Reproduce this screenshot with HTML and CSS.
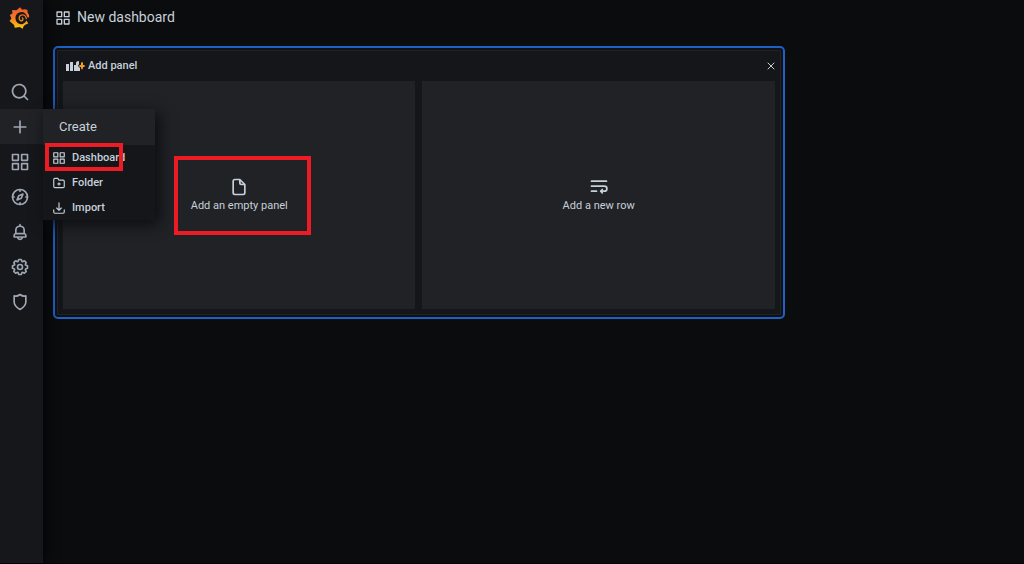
FILE: index.html
```html
<!DOCTYPE html>
<html lang="en">
<head>
<meta charset="utf-8">
<meta name="viewport" content="width=device-width, initial-scale=1">
<title>New dashboard</title>
<link rel="stylesheet" href="styles.css">
</head>
<body>
<svg class="sprite" aria-hidden="true">
  <symbol id="apps" viewBox="0 0 24 24"><path class="line" d="M3 3h7v7H3zM14 3h7v7h-7zM3 14h7v7H3zM14 14h7v7h-7z"/></symbol>
</svg>
<div class="app">
  <aside class="sidebar">
    <a class="logo" href="#" aria-label="Home">
      <svg viewBox="27 21 63 67" width="21" height="22">
        <defs><linearGradient id="flame" gradientUnits="userSpaceOnUse" x1="0" y1="22" x2="0" y2="87"><stop offset="0" stop-color="#f05a28"/><stop offset=".45" stop-color="#f4752a"/><stop offset="1" stop-color="#fbca0a"/></linearGradient></defs>
        <path fill="url(#flame)" d="M60 22L67 29Q75 27 83 30L83 38Q88 44 88 52L83 53Q78 36 65 36Q48 37 46 53Q46 69 60 73Q73 75 80 62L85 71L76 75L71 80L68 87L59 82L44 84L42 76L28 64L34 56L29 45L37 41L36 30L49 31Z"/>
        <path fill="none" stroke="url(#flame)" stroke-width="4" stroke-linecap="round" d="M79 56C78 46 70 43 63 46C55 50 56 61 63 63C69 63 71 57 67 54"/>
      </svg>
    </a>
    <nav aria-label="Main">
      <ul class="nav">
        <li><a class="nav-link" href="#" aria-label="Search"><svg class="icon large" viewBox="0 0 24 24"><path d="M21.71 20.29 18 16.61A9 9 0 1 0 16.61 18l3.68 3.68a1 1 0 0 0 1.42 0 1 1 0 0 0 0-1.39ZM11 18a7 7 0 1 1 7-7 7 7 0 0 1-7 7Z"/></svg></a></li>
        <li class="active"><a class="nav-link" href="#" aria-label="Create"><svg class="icon large" viewBox="0 0 24 24"><path d="M19 11h-6V5a1 1 0 0 0-2 0v6H5a1 1 0 0 0 0 2h6v6a1 1 0 0 0 2 0v-6h6a1 1 0 0 0 0-2Z"/></svg></a>
          <div class="menu">
            <a class="menu-title" href="#">Create</a>
            <ul class="menu-list">
              <li class="marked"><a href="#"><svg class="icon small"><use href="#apps"/></svg>Dashboard</a></li>
              <li><a href="#"><svg class="icon small" viewBox="0 0 24 24"><path class="line" d="M5 4h5l1.500 3H19a2 2 0 0 1 2 2v9a2 2 0 0 1-2 2H5a2 2 0 0 1-2-2V6a2 2 0 0 1 2-2ZM12 11.500v4M10 13.500h4"/></svg>Folder</a></li>
              <li><a href="#"><svg class="icon small" viewBox="0 0 24 24"><path class="line" d="M12 3v13M8 12l4 4 4-4M3 15v4a2 2 0 0 0 2 2h14a2 2 0 0 0 2-2v-4"/></svg>Import</a></li>
            </ul>
          </div>
        </li>
        <li><a class="nav-link" href="#" aria-label="Dashboards"><svg class="icon large"><use href="#apps"/></svg></a></li>
        <li><a class="nav-link" href="#" aria-label="Explore"><svg class="icon large" viewBox="0 0 24 24"><circle class="line" cx="12" cy="12" r="9"/><path class="line" d="M12 3v2M12 19v2M3 12h2M19 12h2M15.500 8.500l-2 5-5 2 2-5Z"/></svg></a></li>
        <li><a class="nav-link" href="#" aria-label="Alerting"><svg class="icon large" viewBox="0 0 24 24"><path d="M18 13.180V10a6 6 0 0 0-5-5.910V3a1 1 0 0 0-2 0v1.090A6 6 0 0 0 6 10v3.180A3 3 0 0 0 4 16v2a1 1 0 0 0 1 1h3.140a4 4 0 0 0 7.720 0H19a1 1 0 0 0 1-1v-2a3 3 0 0 0-2-2.820ZM8 10a4 4 0 0 1 8 0v3H8Zm4 10a2 2 0 0 1-1.720-1h3.440A2 2 0 0 1 12 20Zm6-3H6v-1a1 1 0 0 1 1-1h10a1 1 0 0 1 1 1Z"/></svg></a></li>
        <li><a class="nav-link" href="#" aria-label="Configuration"><svg class="icon large" viewBox="0 0 24 24"><path d="M21.32,9.55l-1.89-.63.89-1.78A1,1,0,0,0,20.13,6L18,3.87a1,1,0,0,0-1.15-.19l-1.78.89-.63-1.89A1,1,0,0,0,13.5,2h-3a1,1,0,0,0-.95.68L8.92,4.57,7.14,3.68A1,1,0,0,0,6,3.87L3.87,6a1,1,0,0,0-.19,1.15l.89,1.78-1.89.63A1,1,0,0,0,2,10.5v3a1,1,0,0,0,.68.95l1.89.63-.89,1.78A1,1,0,0,0,3.87,18L6,20.13a1,1,0,0,0,1.15.19l1.78-.89.63,1.89a1,1,0,0,0,.95.68h3a1,1,0,0,0,.95-.68l.63-1.89,1.78.89A1,1,0,0,0,18,20.13L20.13,18a1,1,0,0,0,.19-1.15l-.89-1.78,1.89-.63A1,1,0,0,0,22,13.5v-3A1,1,0,0,0,21.32,9.55ZM20,12.78l-1.2.4A2,2,0,0,0,17.64,16l.57,1.14-1.1,1.1L16,17.64a2,2,0,0,0-2.79,1.16l-.4,1.2H11.22l-.4-1.2A2,2,0,0,0,8,17.64l-1.14.57-1.1-1.1L6.36,16A2,2,0,0,0,5.2,13.18L4,12.78V11.22l1.2-.4A2,2,0,0,0,6.36,8L5.79,6.89l1.1-1.1L8,6.36A2,2,0,0,0,10.82,5.2l.4-1.2h1.56l.4,1.2A2,2,0,0,0,16,6.36l1.14-.57,1.1,1.1L17.64,8a2,2,0,0,0,1.16,2.79l1.2.4ZM12,8a4,4,0,1,0,4,4A4,4,0,0,0,12,8Zm0,6a2,2,0,1,1,2-2A2,2,0,0,1,12,14Z"/></svg></a></li>
        <li><a class="nav-link" href="#" aria-label="Server Admin"><svg class="icon large" viewBox="0 0 24 24"><path class="line" d="M12 3Q16 6 19 4.500V12Q19 17 12 21Q5 17 5 12V4.500Q8 6 12 3Z"/></svg></a></li>
      </ul>
    </nav>
  </aside>
  <main class="main">
    <header class="toolbar">
      <svg class="icon medium"><use href="#apps"/></svg>
      <h1>New dashboard</h1>
    </header>
    <section class="panel" aria-labelledby="panel-title">
      <header class="panel-head">
        <svg viewBox="0 0 20 12" width="20" height="12" aria-hidden="true"><path fill="#c7d0d9" d="M0 4h3v7H0zM4 2h3v9H4zM8 5h2v6H8zM10 3q0-2 3-2v3l-1 2 2 2v3h-4z"/><path fill="#f79a28" d="M15 3q1-2 2 0v2h1q2 1 0 2h-1v1q-1 3-2 0V7h-1q-2-1 0-2h1z"/></svg>
        <h2 id="panel-title">Add panel</h2>
        <button class="close" type="button" aria-label="Close"><svg viewBox="0 0 8 8" width="8" height="8"><path class="line" d="M1 1l6 6M7 1L1 7"/></svg></button>
      </header>
      <div class="choices">
        <button class="choice" type="button">
          <span class="choice-label marked"><svg class="icon choice-icon" viewBox="0 0 24 24"><path class="line" d="M13 3H7a2 2 0 0 0-2 2v14a2 2 0 0 0 2 2h10a2 2 0 0 0 2-2V9ZM13 3v4a2 2 0 0 0 2 2h4"/></svg>Add an empty panel</span>
        </button>
        <button class="choice" type="button">
          <span class="choice-label"><svg class="icon choice-icon" viewBox="0 0 24 24"><path class="line" d="M3 5h18M3 11h15.500a2.500 2.500 0 0 1 0 6H14M3 17h6M16 15l-2 2 2 2"/></svg>Add a new row</span>
        </button>
      </div>
    </section>
  </main>
</div>
</body>
</html>
```
FILE: styles.css
```css
* {
  box-sizing: border-box;
}

body {
  margin: 0;
  background: #0b0c0e;
  color: #c7d0d9;
  font: 11px/16px Roboto, "Liberation Sans", sans-serif;
}

h1,
h2,
ul {
  margin: 0;
  padding: 0;
  list-style: none;
}

a {
  color: inherit;
  text-decoration: none;
}

button {
  border: 0;
  padding: 0;
  background: none;
  color: inherit;
  font: inherit;
  cursor: pointer;
}

svg {
  display: block;
  flex: none;
}

.sprite {
  position: absolute;
  width: 0;
  height: 0;
}

.icon {
  fill: currentColor;
}

.line {
  fill: none;
  stroke: currentColor;
  stroke-width: 2;
  stroke-linecap: round;
  stroke-linejoin: round;
}

.small {
  width: 14px;
  height: 14px;
}

.medium {
  width: 16px;
  height: 16px;
}

.large,
.choice-icon {
  width: 20px;
  height: 20px;
}

.app {
  display: flex;
  min-height: 100vh;
  border-bottom: 1px solid #08020b;
}

.sidebar {
  position: relative;
  z-index: 1;
  flex: none;
  width: 43px;
  background: #15171b;
  box-shadow: 0 0 16px #000;
  color: #9fa7b3;
}

.logo {
  display: block;
  padding: 7px 0 0 9px;
  height: 74px;
}

.nav > li {
  position: relative;
}

.nav-link {
  display: flex;
  align-items: center;
  padding-left: 10px;
  height: 35px;
}

.active {
  background: #202226;
}

.menu {
  position: absolute;
  top: 0;
  left: 100%;
  width: 112px;
  background: #141619;
  box-shadow: 4px 4px 14px #0b0c0e;
  color: #c7d0d9;
}

.menu-title {
  display: block;
  padding: 8px 16px;
  background: #202226;
  font-size: 13px;
  line-height: 20px;
}

.menu-list a {
  display: flex;
  align-items: center;
  gap: 6px;
  padding-left: 9px;
  height: 25px;
  font-weight: 500;
}

.marked {
  position: relative;
}

.marked::after {
  content: "";
  position: absolute;
  border: 4px solid #ed1c24;
  pointer-events: none;
}

.menu .marked::after {
  inset: -2px 32px -1px 2px;
}

.choice .marked::after {
  inset: -21px -23px -21px -17px;
}

.main {
  flex: 1;
  padding: 0 8px 8px 10px;
}

.toolbar {
  display: flex;
  align-items: center;
  gap: 6px;
  padding: 5px 2px 16px;
}

.toolbar h1 {
  font-size: 14px;
  font-weight: 400;
  line-height: 25px;
}

.panel {
  width: 76%;
  padding: 8px;
  border: 2px solid #1f60c4;
  border-radius: 5px;
  background: #141619;
  box-shadow: inset 0 0 0 2px #0f1114, inset 0 0 0 3px #202226;
}

.panel-head {
  display: flex;
  align-items: center;
  gap: 2px;
  padding: 2px 0 7px 3px;
}

.panel-head h2 {
  flex: 1;
  font-size: 11px;
  font-weight: 500;
  line-height: 16px;
}

.close .line {
  stroke-width: 1;
}

.choices {
  display: grid;
  grid-template-columns: 1fr 1fr;
  gap: 7px;
}

.choice {
  display: flex;
  align-items: center;
  justify-content: center;
  min-height: 228px;
  background: #202226;
}

.choice-label {
  display: flex;
  flex-direction: column;
  align-items: center;
  gap: 1px;
}
```
